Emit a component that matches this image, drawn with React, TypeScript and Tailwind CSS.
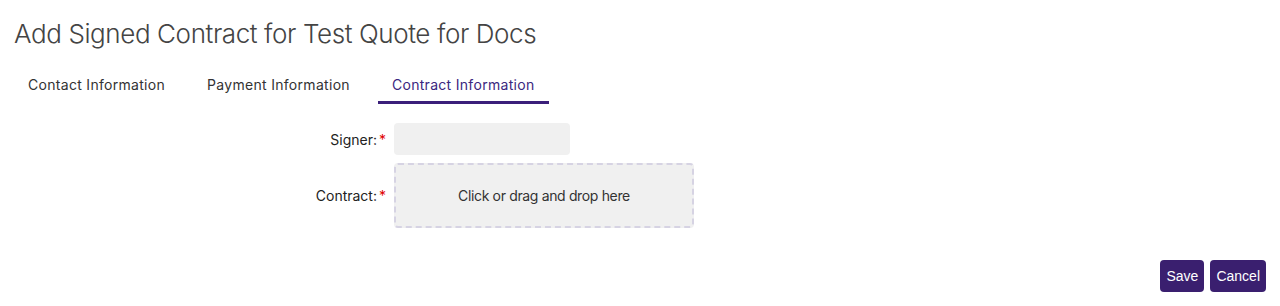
import React from "react";

const tabs = ["Contact Information", "Payment Information", "Contract Information"];

export default function App() {
  const active = 2;

  return (
    <div className="w-[1280px] h-[306px] bg-white text-[#333333] font-['Inter','Noto_Sans',sans-serif] flex flex-col">
      <h1 className="pl-[14px] pt-[17px] text-[26px] leading-[34px] font-light text-[#444444] tracking-[-0.4px]">
        Add Signed Contract for Test Quote for Docs
      </h1>

      <div className="flex gap-[14px] pl-[14px] mt-[19px]">
        {tabs.map((t, i) => (
          <div
            key={t}
            className={
              "px-[14px] pt-[6px] pb-[7px] text-[14px] leading-[18px] tracking-[0.3px] border-b-[3px] " +
              (i === active ? "text-[#3b2780] border-[#3b1f7a]" : "text-[#333333] border-transparent")
            }
          >
            {t}
          </div>
        ))}
      </div>

      <div className="grid grid-cols-[386px_auto] gap-x-[8px] gap-y-[8px] mt-[19px] items-center">
        <label className="text-right text-[14px] text-[#222222]">
          Signer:<span className="text-[#e00000] ml-[2px]">*</span>
        </label>
        <div className="w-[176px] h-[32px] rounded-[4px] bg-[#f0f0f0]" />

        <label className="text-right text-[14px] text-[#222222]">
          Contract:<span className="text-[#e00000] ml-[2px]">*</span>
        </label>
        <div className="w-[300px] h-[65px] rounded-[4px] bg-[#f0f0f0] border-2 border-dashed border-[#d6d3e3] flex items-center justify-center text-[14px] tracking-[-0.35px] text-[#333333]">
          Click or drag and drop here
        </div>
      </div>

      <div className="flex justify-end gap-[6px] pr-[14px] mt-auto mb-[14px]">
        <button className="h-[32px] px-[6px] rounded-[4px] bg-[#3a1f6f] text-white text-[14px] font-['Liberation_Sans',Arial,sans-serif]">
          Save
        </button>
        <button className="h-[32px] px-[6px] rounded-[4px] bg-[#3a1f6f] text-white text-[14px] font-['Liberation_Sans',Arial,sans-serif]">
          Cancel
        </button>
      </div>
    </div>
  );
}
